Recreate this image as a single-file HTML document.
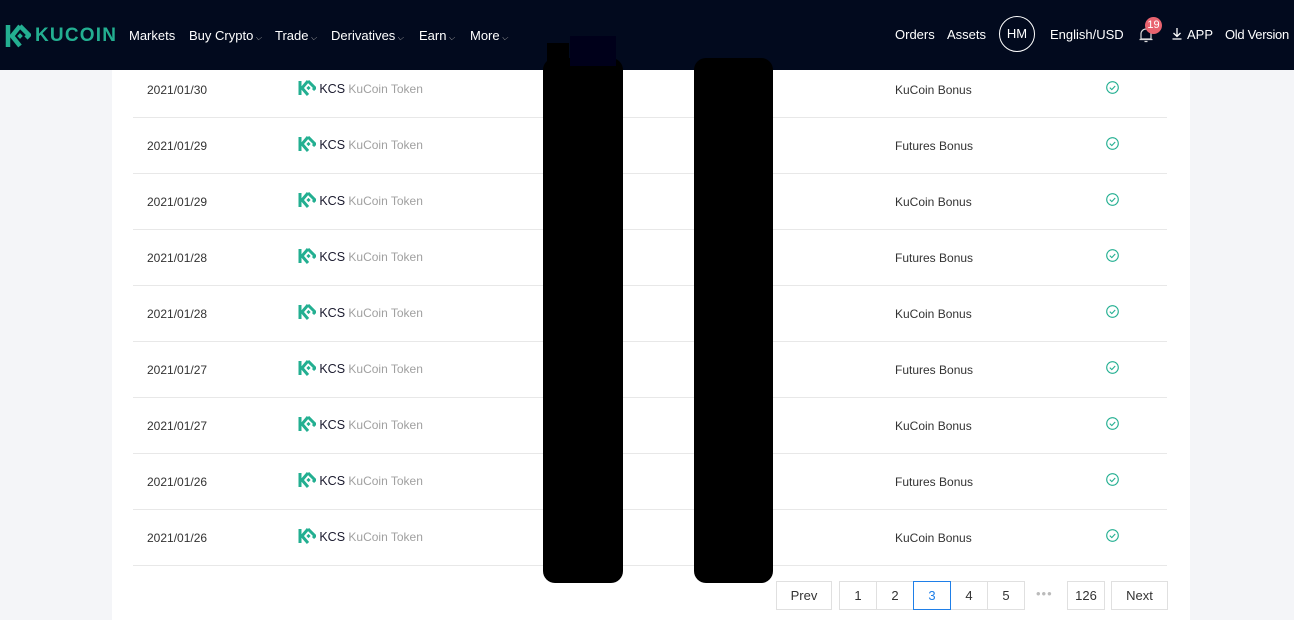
<!DOCTYPE html>
<html><head><meta charset="utf-8"><style>
*{margin:0;padding:0;box-sizing:border-box}
html,body{width:1294px;height:620px;overflow:hidden}
body{background:#f4f5f8;font-family:"Liberation Sans",sans-serif;position:relative}
.hdr{position:absolute;left:0;top:0;width:1294px;height:70px;background:#020a1e;color:#fff;font-size:13px}
.hdr span{position:absolute;top:28px;white-space:nowrap}
.car{font-size:8px;color:#aaa;margin-left:2px}
.card{position:absolute;left:112px;top:62px;width:1078px;height:558px;background:#fff}
.row{position:absolute;left:133px;width:1034px;height:56px;border-bottom:1px solid #e8e8e8;font-size:12px;color:#333}
.row div{position:absolute;top:21px;white-space:nowrap}
.row .c{top:18px;font-size:12px}
.kcs{color:#1a1a2e;font-size:12.5px}
.tok{color:#a0a0a0;font-size:12px}
.blk{position:absolute;background:#000;border-radius:12px}
.pg{position:absolute;top:581px;height:29px;border:1px solid #e0e0e0;background:#fff;font-size:13px;color:#333;text-align:center;line-height:27px}
</style></head><body>
<div class="card"></div>
<div class="row" style="top:62px"><div style="left:14px">2021/01/30</div><div class="c" style="left:165px"><svg width="18" height="16" viewBox="0 0 18 16" style="vertical-align:-3px"><path d="M2 1v14" stroke="#23af91" stroke-width="3"/><path d="M10 1L4 8l6 7M10 1l7 7-2 2" stroke="#23af91" stroke-width="3" fill="none"/><rect x="9" y="6.5" width="3" height="3" fill="#23af91" transform="rotate(45 10.5 8)"/></svg> <span class="kcs">KCS</span> <span class="tok">KuCoin Token</span></div><div style="left:762px">KuCoin Bonus</div><div style="left:973px;top:19px"><svg width="13" height="13" viewBox="0 0 13 13"><circle cx="6.5" cy="6.5" r="5.8" fill="none" stroke="#23af91" stroke-width="1.1"/><path d="M3.8 6.6l2 2 3.4-3.6" fill="none" stroke="#23af91" stroke-width="1.1"/></svg></div></div>
<div class="row" style="top:118px"><div style="left:14px">2021/01/29</div><div class="c" style="left:165px"><svg width="18" height="16" viewBox="0 0 18 16" style="vertical-align:-3px"><path d="M2 1v14" stroke="#23af91" stroke-width="3"/><path d="M10 1L4 8l6 7M10 1l7 7-2 2" stroke="#23af91" stroke-width="3" fill="none"/><rect x="9" y="6.5" width="3" height="3" fill="#23af91" transform="rotate(45 10.5 8)"/></svg> <span class="kcs">KCS</span> <span class="tok">KuCoin Token</span></div><div style="left:762px">Futures Bonus</div><div style="left:973px;top:19px"><svg width="13" height="13" viewBox="0 0 13 13"><circle cx="6.5" cy="6.5" r="5.8" fill="none" stroke="#23af91" stroke-width="1.1"/><path d="M3.8 6.6l2 2 3.4-3.6" fill="none" stroke="#23af91" stroke-width="1.1"/></svg></div></div>
<div class="row" style="top:174px"><div style="left:14px">2021/01/29</div><div class="c" style="left:165px"><svg width="18" height="16" viewBox="0 0 18 16" style="vertical-align:-3px"><path d="M2 1v14" stroke="#23af91" stroke-width="3"/><path d="M10 1L4 8l6 7M10 1l7 7-2 2" stroke="#23af91" stroke-width="3" fill="none"/><rect x="9" y="6.5" width="3" height="3" fill="#23af91" transform="rotate(45 10.5 8)"/></svg> <span class="kcs">KCS</span> <span class="tok">KuCoin Token</span></div><div style="left:762px">KuCoin Bonus</div><div style="left:973px;top:19px"><svg width="13" height="13" viewBox="0 0 13 13"><circle cx="6.5" cy="6.5" r="5.8" fill="none" stroke="#23af91" stroke-width="1.1"/><path d="M3.8 6.6l2 2 3.4-3.6" fill="none" stroke="#23af91" stroke-width="1.1"/></svg></div></div>
<div class="row" style="top:230px"><div style="left:14px">2021/01/28</div><div class="c" style="left:165px"><svg width="18" height="16" viewBox="0 0 18 16" style="vertical-align:-3px"><path d="M2 1v14" stroke="#23af91" stroke-width="3"/><path d="M10 1L4 8l6 7M10 1l7 7-2 2" stroke="#23af91" stroke-width="3" fill="none"/><rect x="9" y="6.5" width="3" height="3" fill="#23af91" transform="rotate(45 10.5 8)"/></svg> <span class="kcs">KCS</span> <span class="tok">KuCoin Token</span></div><div style="left:762px">Futures Bonus</div><div style="left:973px;top:19px"><svg width="13" height="13" viewBox="0 0 13 13"><circle cx="6.5" cy="6.5" r="5.8" fill="none" stroke="#23af91" stroke-width="1.1"/><path d="M3.8 6.6l2 2 3.4-3.6" fill="none" stroke="#23af91" stroke-width="1.1"/></svg></div></div>
<div class="row" style="top:286px"><div style="left:14px">2021/01/28</div><div class="c" style="left:165px"><svg width="18" height="16" viewBox="0 0 18 16" style="vertical-align:-3px"><path d="M2 1v14" stroke="#23af91" stroke-width="3"/><path d="M10 1L4 8l6 7M10 1l7 7-2 2" stroke="#23af91" stroke-width="3" fill="none"/><rect x="9" y="6.5" width="3" height="3" fill="#23af91" transform="rotate(45 10.5 8)"/></svg> <span class="kcs">KCS</span> <span class="tok">KuCoin Token</span></div><div style="left:762px">KuCoin Bonus</div><div style="left:973px;top:19px"><svg width="13" height="13" viewBox="0 0 13 13"><circle cx="6.5" cy="6.5" r="5.8" fill="none" stroke="#23af91" stroke-width="1.1"/><path d="M3.8 6.6l2 2 3.4-3.6" fill="none" stroke="#23af91" stroke-width="1.1"/></svg></div></div>
<div class="row" style="top:342px"><div style="left:14px">2021/01/27</div><div class="c" style="left:165px"><svg width="18" height="16" viewBox="0 0 18 16" style="vertical-align:-3px"><path d="M2 1v14" stroke="#23af91" stroke-width="3"/><path d="M10 1L4 8l6 7M10 1l7 7-2 2" stroke="#23af91" stroke-width="3" fill="none"/><rect x="9" y="6.5" width="3" height="3" fill="#23af91" transform="rotate(45 10.5 8)"/></svg> <span class="kcs">KCS</span> <span class="tok">KuCoin Token</span></div><div style="left:762px">Futures Bonus</div><div style="left:973px;top:19px"><svg width="13" height="13" viewBox="0 0 13 13"><circle cx="6.5" cy="6.5" r="5.8" fill="none" stroke="#23af91" stroke-width="1.1"/><path d="M3.8 6.6l2 2 3.4-3.6" fill="none" stroke="#23af91" stroke-width="1.1"/></svg></div></div>
<div class="row" style="top:398px"><div style="left:14px">2021/01/27</div><div class="c" style="left:165px"><svg width="18" height="16" viewBox="0 0 18 16" style="vertical-align:-3px"><path d="M2 1v14" stroke="#23af91" stroke-width="3"/><path d="M10 1L4 8l6 7M10 1l7 7-2 2" stroke="#23af91" stroke-width="3" fill="none"/><rect x="9" y="6.5" width="3" height="3" fill="#23af91" transform="rotate(45 10.5 8)"/></svg> <span class="kcs">KCS</span> <span class="tok">KuCoin Token</span></div><div style="left:762px">KuCoin Bonus</div><div style="left:973px;top:19px"><svg width="13" height="13" viewBox="0 0 13 13"><circle cx="6.5" cy="6.5" r="5.8" fill="none" stroke="#23af91" stroke-width="1.1"/><path d="M3.8 6.6l2 2 3.4-3.6" fill="none" stroke="#23af91" stroke-width="1.1"/></svg></div></div>
<div class="row" style="top:454px"><div style="left:14px">2021/01/26</div><div class="c" style="left:165px"><svg width="18" height="16" viewBox="0 0 18 16" style="vertical-align:-3px"><path d="M2 1v14" stroke="#23af91" stroke-width="3"/><path d="M10 1L4 8l6 7M10 1l7 7-2 2" stroke="#23af91" stroke-width="3" fill="none"/><rect x="9" y="6.5" width="3" height="3" fill="#23af91" transform="rotate(45 10.5 8)"/></svg> <span class="kcs">KCS</span> <span class="tok">KuCoin Token</span></div><div style="left:762px">Futures Bonus</div><div style="left:973px;top:19px"><svg width="13" height="13" viewBox="0 0 13 13"><circle cx="6.5" cy="6.5" r="5.8" fill="none" stroke="#23af91" stroke-width="1.1"/><path d="M3.8 6.6l2 2 3.4-3.6" fill="none" stroke="#23af91" stroke-width="1.1"/></svg></div></div>
<div class="row" style="top:510px"><div style="left:14px">2021/01/26</div><div class="c" style="left:165px"><svg width="18" height="16" viewBox="0 0 18 16" style="vertical-align:-3px"><path d="M2 1v14" stroke="#23af91" stroke-width="3"/><path d="M10 1L4 8l6 7M10 1l7 7-2 2" stroke="#23af91" stroke-width="3" fill="none"/><rect x="9" y="6.5" width="3" height="3" fill="#23af91" transform="rotate(45 10.5 8)"/></svg> <span class="kcs">KCS</span> <span class="tok">KuCoin Token</span></div><div style="left:762px">KuCoin Bonus</div><div style="left:973px;top:19px"><svg width="13" height="13" viewBox="0 0 13 13"><circle cx="6.5" cy="6.5" r="5.8" fill="none" stroke="#23af91" stroke-width="1.1"/><path d="M3.8 6.6l2 2 3.4-3.6" fill="none" stroke="#23af91" stroke-width="1.1"/></svg></div></div>

<div class="hdr">
<svg style="position:absolute;left:5px;top:24px" width="26" height="24" viewBox="0 0 26 24"><path d="M3 1v22" stroke="#23af91" stroke-width="4.5"/><path d="M15 2L7 12l8 10M15 2l9 9-3 3" stroke="#23af91" stroke-width="4.5" fill="none"/><rect x="13" y="10" width="4" height="4" fill="#23af91" transform="rotate(45 15 12)"/></svg>
<span style="left:35px;top:25px;font-size:19px;font-weight:bold;color:#23af91;letter-spacing:1.2px">KUCOIN</span>
<span style="left:129px">Markets</span>
<span style="left:189px">Buy Crypto<i class="car">⌵</i></span>
<span style="left:275px">Trade<i class="car">⌵</i></span>
<span style="left:331px">Derivatives<i class="car">⌵</i></span>
<span style="left:419px">Earn<i class="car">⌵</i></span>
<span style="left:470px">More<i class="car">⌵</i></span>
<span style="left:895px;top:27px">Orders</span>
<span style="left:947px;top:27px">Assets</span>
<div style="position:absolute;left:999px;top:16px;width:36px;height:36px;border:1.5px solid #fff;border-radius:50%;text-align:center;line-height:33px;font-size:13px">HM</div>
<span style="left:1050px;top:27px">English/USD</span>
<svg style="position:absolute;left:1139px;top:27px" width="14" height="16" viewBox="0 0 14 16"><path d="M2 12V7a5 5 0 0110 0v5zM0.5 12.5h13M5.5 14.5h3" stroke="#ddd" stroke-width="1.2" fill="none"/></svg>
<div style="position:absolute;left:1145px;top:17px;width:17px;height:17px;border-radius:50%;background:#e8636f;font-size:11px;text-align:center;line-height:17px;color:#fff">19</div>
<svg style="position:absolute;left:1172px;top:28px" width="10" height="12" viewBox="0 0 10 12"><path d="M5 0v8M1.5 5l3.5 3.5L8.5 5M0.5 11h9" stroke="#fff" stroke-width="1.3" fill="none"/></svg>
<span style="left:1187px;top:27px">APP</span>
<span style="left:1225px;top:27px;letter-spacing:-0.3px">Old Version</span>
</div>

<div class="blk" style="left:543px;top:58px;width:80px;height:525px"></div>
<div style="position:absolute;left:547px;top:43px;width:22px;height:30px;background:#000"></div>
<div style="position:absolute;left:570px;top:36px;width:46px;height:30px;background:#00001a"></div>
<div class="blk" style="left:694px;top:58px;width:79px;height:525px"></div>

<div class="pg" style="left:776px;width:56px">Prev</div>
<div class="pg" style="left:839px;width:38px">1</div>
<div class="pg" style="left:876px;width:38px">2</div>
<div class="pg" style="left:913px;width:38px;border-color:#1f7fe8;color:#1f7fe8;z-index:2">3</div>
<div class="pg" style="left:950px;width:38px">4</div>
<div class="pg" style="left:987px;width:38px">5</div>
<div style="position:absolute;left:1036px;top:586px;color:#bbb;font-size:13px;letter-spacing:1px">•••</div>
<div class="pg" style="left:1067px;width:38px">126</div>
<div class="pg" style="left:1111px;width:57px">Next</div>
</body></html>
